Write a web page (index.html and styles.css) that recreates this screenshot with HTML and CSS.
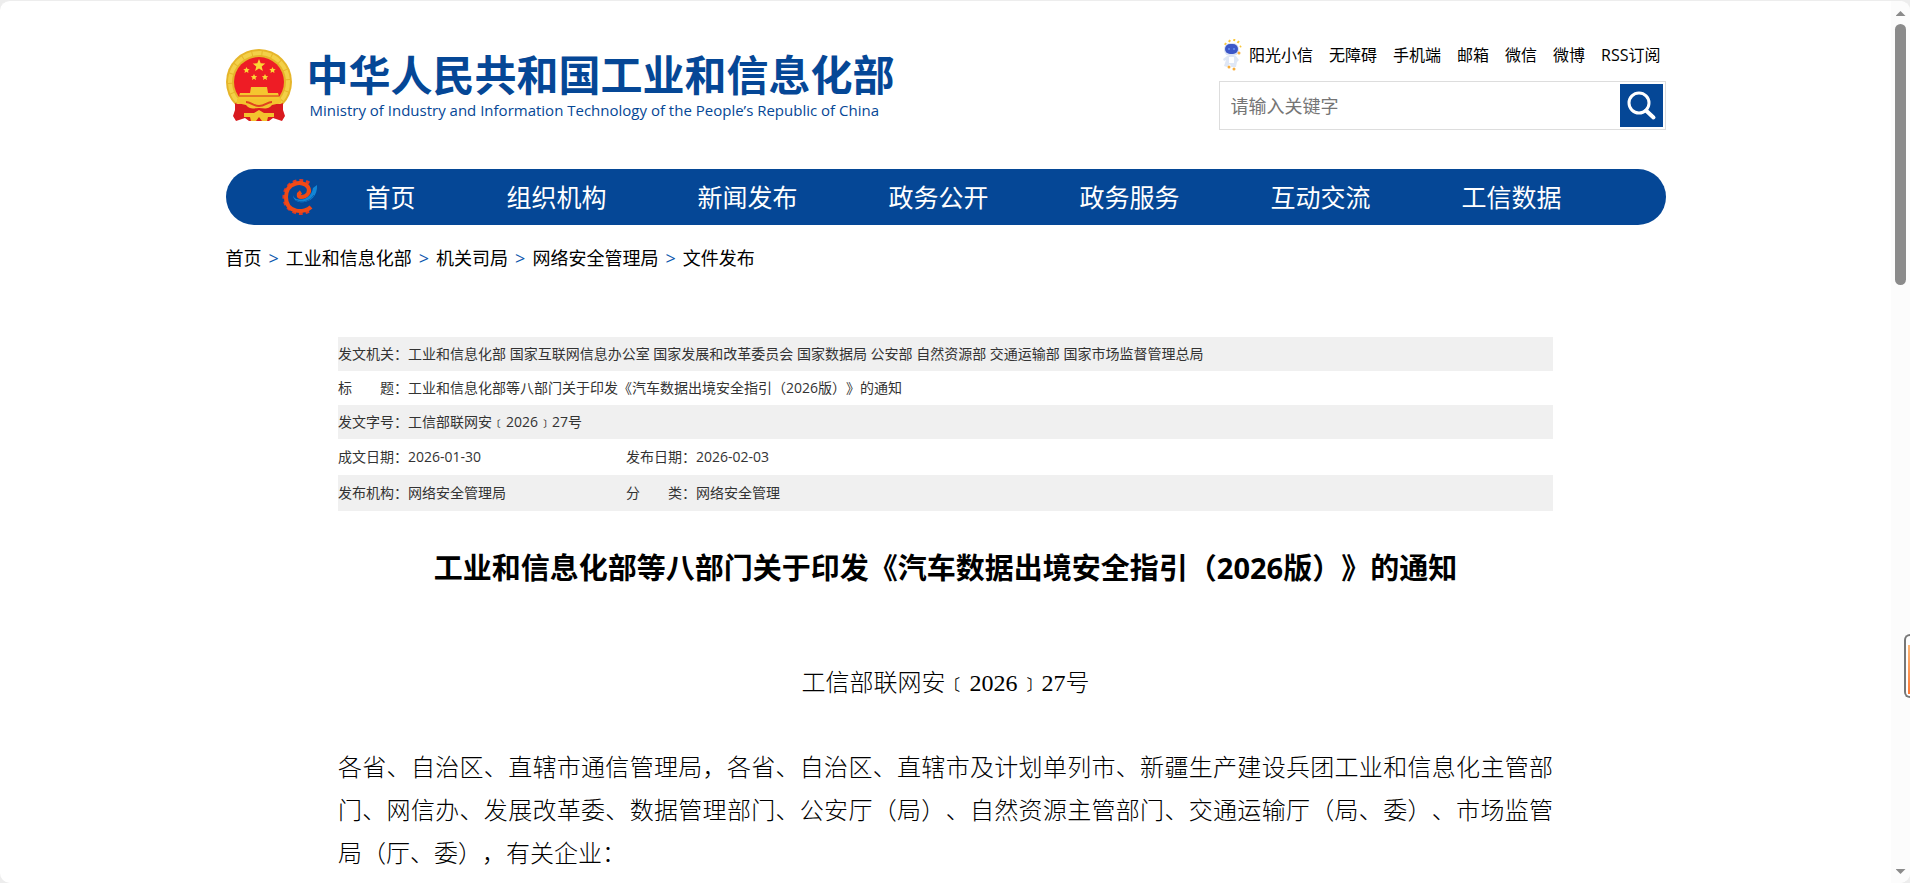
FILE: index.html
```html
<!DOCTYPE html>
<html lang="zh-CN">
<head>
<meta charset="utf-8">
<title>工业和信息化部等八部门关于印发《汽车数据出境安全指引（2026版）》的通知</title>
<link rel="stylesheet" href="styles.css">
</head>
<body>
<div class="window">
  <div class="page">
    <div class="container">
      <header class="header">
        <a class="brand" href="#">
          <svg class="emblem" viewBox="0 0 66 72" aria-hidden="true">
            <circle cx="33" cy="33" r="33" fill="#e6b52a"/>
            <circle cx="33" cy="33" r="29" fill="none" stroke="#f3d048" stroke-width="4" stroke-dasharray="9 1"/>
            <circle cx="33" cy="33" r="25" fill="#ee1c25"/>
            <path d="M33 10l1.700 4.300 4.600.3-3.600 2.900 1.200 4.500-3.900-2.500-3.900 2.500 1.200-4.500-3.600-2.900 4.600-.3z" fill="#fbd835"/>
            <path d="M20.500 18l1 2 2.200.2-1.700 1.500.5 2.300-2-1.200-2 1.200.5-2.300-1.700-1.500 2.200-.2zM46.500 18l1 2 2.200.2-1.700 1.500.5 2.300-2-1.200-2 1.200.5-2.300-1.700-1.500 2.200-.2zM28 25l1 2 2.200.2-1.700 1.500.5 2.300-2-1.200-2 1.200.5-2.300-1.700-1.500 2.200-.2zM39 25l1 2 2.200.2-1.700 1.500.5 2.300-2-1.200-2 1.200.5-2.300-1.700-1.500 2.200-.2z" fill="#fbd835"/>
            <path d="M25 38h16l1 6h10l2 6H12l2-6h10z" fill="#f5c62f"/>
            <path d="M13 47h40" stroke="#d7251f" stroke-width="1"/>
            <path d="M9 54c5 3 8-1 12-1h24c4 0 7 4 12 1v7l2 6-3 5-9-3-4 3H23l-4-3-9 3-3-5 2-6z" fill="#d91a1f"/>
            <path d="M11 50h44v4l-9 2c-4 5-8 3-13 3s-9 2-13-3l-9-2zM18 64h10l5-3 5 3h10v4h-6l-1 4h-5l-3-4-3 4h-5l-1-4h-6z" fill="#f3c32e"/>
            <path d="M20 53c5 0 7 4 13 4s8-4 13-4" fill="none" stroke="#e0421f" stroke-width="2"/>
          </svg>
          <span class="brand-text">
            <span class="brand-cn">中华人民共和国工业和信息化部</span>
            <span class="brand-en">Ministry of Industry and Information Technology of the People’s Republic of China</span>
          </span>
        </a>
        <div class="tools">
          <ul class="quick">
            <li><a class="mascot-link" href="#"><svg class="mascot" viewBox="0 0 20 32" aria-hidden="true">
              <path d="M3 6l1-2M7 3l1-2M12 2l.5-2M15.500 4l1.500-2M18 8l1-1" stroke="#f9c63a" stroke-width="2"/>
              <rect x="2" y="4" width="15" height="13" rx="6" fill="#dbe3f5"/>
              <rect x="3" y="5" width="13" height="10" rx="5" fill="#3c57c8"/>
              <path d="M6 10h2M11 10h2" stroke="#5b82e8" stroke-width="2"/>
              <path d="M5 17h9l3 4-2 2-1 5H9l-1-3-3 3-3-1 2-6-2 1-1-2z" fill="#dfe7f6"/>
              <path d="M7 18h5v6H7z" fill="#fff"/>
              <circle cx="7" cy="28" r="1.500" fill="#f7ad3c"/><circle cx="12" cy="30" r="1.500" fill="#f7ad3c"/><circle cx="17" cy="14" r="1.500" fill="#f7ad3c"/>
            </svg>阳光小信</a></li>
            <li><a href="#">无障碍</a></li>
            <li><a href="#">手机端</a></li>
            <li><a href="#">邮箱</a></li>
            <li><a href="#">微信</a></li>
            <li><a href="#">微博</a></li>
            <li><a href="#">RSS订阅</a></li>
          </ul>
          <form class="search">
            <input class="search-input" type="text" placeholder="请输入关键字" aria-label="请输入关键字">
            <button class="search-button" type="button" aria-label="搜索"><svg viewBox="0 0 43 43" aria-hidden="true"><circle cx="19" cy="19" r="10" fill="none" stroke="#fff" stroke-width="3"/><path d="M26 26.500l7.500 7" stroke="#fff" stroke-width="4" stroke-linecap="round"/></svg></button>
          </form>
        </div>
      </header>
      <nav class="nav">
        <svg class="nav-logo" viewBox="0 0 36 38" aria-hidden="true">
          <path d="M27 5.500A16 16 0 1 0 27 32.500" fill="none" stroke="#dc3a26" stroke-width="4" stroke-dasharray="3.600 2.800"/>
          <path d="M29 29C23 35 4 36 4 19 4 4 21 2 26 9c3 5-1 10-7 10-3 0-3-3 0-5" fill="none" stroke="#f04a16" stroke-width="4"/>
          <path d="M11 17c1 7 18 7 20-7l4-3c1 12-9 19-18 17-4-1-6-4-6-7z" fill="#1286d6"/>
          <path d="M14 22c6 4 14 1 18-5" fill="none" stroke="#0b5fae" stroke-width="1"/>
        </svg>
        <ul class="nav-list">
          <li><a href="#">首页</a></li>
          <li><a href="#">组织机构</a></li>
          <li><a href="#">新闻发布</a></li>
          <li><a href="#">政务公开</a></li>
          <li><a href="#">政务服务</a></li>
          <li><a href="#">互动交流</a></li>
          <li><a href="#">工信数据</a></li>
        </ul>
      </nav>
      <div class="crumbs">
        <a href="#">首页</a><span class="sep">&gt;</span><a href="#">工业和信息化部</a><span class="sep">&gt;</span><a href="#">机关司局</a><span class="sep">&gt;</span><a href="#">网络安全管理局</a><span class="sep">&gt;</span><a href="#">文件发布</a>
      </div>
      <article class="article">
        <table class="meta">
          <colgroup><col class="col-label"><col class="col-value"><col class="col-label"><col></colgroup>
          <tr><th scope="row">发文机关：</th><td colspan="3">工业和信息化部 国家互联网信息办公室 国家发展和改革委员会 国家数据局 公安部 自然资源部 交通运输部 国家市场监督管理总局</td></tr>
          <tr><th scope="row">标　　题：</th><td colspan="3">工业和信息化部等八部门关于印发《汽车数据出境安全指引（2026版）》的通知</td></tr>
          <tr><th scope="row">发文字号：</th><td colspan="3">工信部联网安﹝2026﹞27号</td></tr>
          <tr><th scope="row">成文日期：</th><td>2026-01-30</td><th scope="row">发布日期：</th><td>2026-02-03</td></tr>
          <tr><th scope="row">发布机构：</th><td>网络安全管理局</td><th scope="row">分　　类：</th><td>网络安全管理</td></tr>
        </table>
        <h1 class="title">工业和信息化部等八部门关于印发《汽车数据出境安全指引（2026版）》的通知</h1>
        <p class="doc-number">工信部联网安﹝2026﹞27号</p>
        <p class="body-text">各省、自治区、直辖市通信管理局，各省、自治区、直辖市及计划单列市、新疆生产建设兵团工业和信息化主管部门、网信办、发展改革委、数据管理部门、公安厅（局）、自然资源主管部门、交通运输厅（局、委）、市场监管局（厅、委），有关企业：</p>
      </article>
    </div>
  </div>
  <div class="scrollbar" aria-hidden="true">
    <span class="arrow arrow-up"></span>
    <span class="thumb"></span>
    <span class="arrow arrow-down"></span>
  </div>
  <div class="side-tab" aria-hidden="true"><span class="side-fill"></span></div>
</div>
</body>
</html>
```
FILE: styles.css
```css
* { box-sizing: border-box; }
body {
  margin: 0;
  background: #ededed;
  color: #000;
  font-family: "Open Sans", "Noto Sans CJK SC", sans-serif;
  text-spacing-trim: space-all;
}
a { color: inherit; text-decoration: none; }
ul { margin: 0; padding: 0; list-style: none; }
.window {
  position: relative;
  display: flex;
  height: 100vh;
  overflow: hidden;
  border-top: 1px solid #ededed;
  border-radius: 10px;
  background: #fff;
}
.page { flex: 1; min-width: 0; overflow: hidden; }
.container { width: 100%; max-width: 1440px; margin: 0 auto; }

.header {
  display: flex;
  justify-content: space-between;
  height: 168px;
}
.brand {
  display: flex;
  align-items: flex-start;
  gap: 15px;
  padding-top: 48px;
  color: #054796;
}
.emblem { width: 66px; height: 72px; }
.brand-text { display: flex; flex-direction: column; white-space: nowrap; }
.brand-cn { font-size: 42px; line-height: 52px; font-weight: 700; }
.brand-en { padding-left: 3px; font-size: 15px; line-height: 18px; }

.tools { width: 447px; padding-top: 38px; }
.quick {
  display: flex;
  justify-content: flex-end;
  gap: 16px;
  padding-right: 5px;
  font-size: 16px;
  line-height: 32px;
  white-space: nowrap;
}
.mascot-link { display: flex; align-items: center; gap: 7px; }
.mascot { width: 20px; height: 32px; }
.search {
  display: flex;
  align-items: center;
  height: 49px;
  margin-top: 10px;
  padding: 0 2px 0 0;
  border: 1px solid #ddd;
}
.search-input {
  flex: 1;
  min-width: 0;
  height: 43px;
  padding: 0 11px;
  border: 0;
  outline: 0;
  font: 18px "Open Sans", "Noto Sans CJK SC", sans-serif;
}
.search-input::placeholder { color: #757575; }
.search-button {
  width: 43px;
  height: 43px;
  padding: 0;
  border: 0;
  background: #054796;
}
.search-button svg { display: block; }

.nav {
  display: flex;
  align-items: center;
  gap: 48px;
  height: 56px;
  padding-left: 56px;
  border-radius: 28px;
  background: #054796;
  color: #fff;
}
.nav-logo { width: 36px; height: 38px; }
.nav-list {
  display: flex;
  gap: 91px;
  font-size: 25px;
  line-height: 58px;
  white-space: nowrap;
}
.crumbs { padding-top: 16px; font-size: 18px; line-height: 34px; }
.sep { margin: 0 7px; color: #0b56ad; }

.article { max-width: 1215px; margin: 62px auto 0; }
.meta {
  width: 100%;
  border-collapse: collapse;
  table-layout: fixed;
  color: #333;
  font-size: 14px;
  line-height: 34px;
}
.meta th, .meta td { padding: 0; text-align: left; font-weight: 400; white-space: nowrap; }
.meta tr { height: 34px; }
.meta tr:nth-child(n+4) { height: 36px; }
.meta tr:nth-child(odd) { background: #f0f0f0; }
.col-label { width: 70px; }
.col-value { width: 218px; }
.title {
  margin: 35px 0 0;
  font-size: 29px;
  line-height: 44px;
  font-weight: 700;
  text-align: center;
}
.doc-number, .body-text {
  margin: 0;
  font-family: "Liberation Serif", "Noto Sans CJK SC", serif;
  font-size: 24px;
  font-weight: 300;
  line-height: 43px;
}
.doc-number { padding-top: 72px; text-align: center; }
.body-text { padding-top: 42px; text-align: justify; }

.scrollbar {
  display: flex;
  flex-direction: column;
  align-items: center;
  width: 19px;
  padding: 10px 0 9px;
  background: #fcfcfc;
}
.arrow { width: 10px; height: 5px; background: #8b8b8b; }
.arrow-up { clip-path: polygon(50% 0, 100% 100%, 0 100%); }
.arrow-down { margin-top: auto; clip-path: polygon(0 0, 100% 0, 50% 100%); }
.thumb { width: 11px; height: 261px; margin-top: 8px; border-radius: 6px; background: #8b8b8b; }
.side-tab {
  position: absolute;
  top: 633px;
  right: 0;
  width: 6px;
  height: 64px;
  padding: 9px 0 2px 2px;
  border: 2px solid #777;
  border-right: 0;
  border-radius: 6px 0 0 6px;
  background: #fff;
}
.side-fill { display: block; height: 100%; background: linear-gradient(#ffb877, #ff7a35); }
```
